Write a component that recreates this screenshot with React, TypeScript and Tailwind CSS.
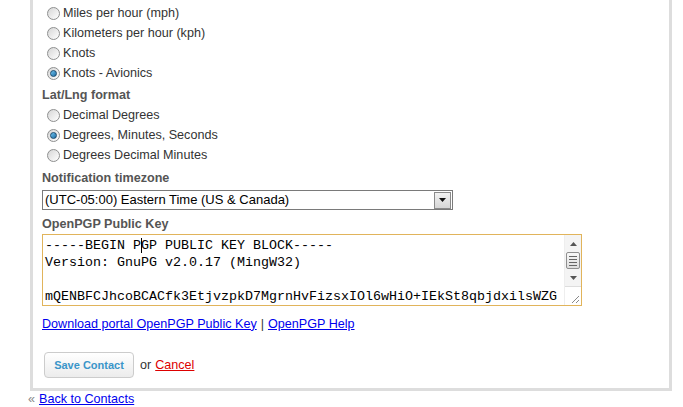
import React from "react"

function Radio({ label, checked = false }: { label: string; checked?: boolean }) {
  return (
    <div className="flex h-5 items-center pl-[5px]">
      <span className="flex h-[13px] w-[13px] items-center justify-center rounded-full border border-[#8e8f8f] bg-gradient-to-br from-[#d6d6d6] to-[#ffffff]">
        {checked && (
          <span className="h-[7px] w-[7px] rounded-full border border-[#1a4a6e] bg-gradient-to-br from-[#6ec3f0] to-[#1f6fa5]" />
        )}
      </span>
      <span className="ml-[3px]">{label}</span>
    </div>
  )
}

function FieldLabel({ children }: { children: React.ReactNode }) {
  return <div className="flex h-5 items-center font-bold text-[#555]">{children}</div>
}

export default function App() {
  const mono = { fontFamily: '"Liberation Mono", "Courier New", monospace' }
  return (
    <div
      className="h-[407px] w-[683px] overflow-hidden bg-white text-[12.6px] text-[#333]"
      style={{ fontFamily: '"Liberation Sans", Arial, sans-serif' }}
    >
      <div className="ml-[30px] w-[642px] border-x-[3px] border-b-[3px] border-[#dddddd] pb-[10px] pl-[9px] pt-[3px]">
        <Radio label="Miles per hour (mph)" />
        <Radio label="Kilometers per hour (kph)" />
        <Radio label="Knots" />
        <Radio label="Knots - Avionics" checked />
        <div className="h-[2px]" />
        <FieldLabel>Lat/Lng format</FieldLabel>
        <Radio label="Decimal Degrees" />
        <Radio label="Degrees, Minutes, Seconds" checked />
        <Radio label="Degrees Decimal Minutes" />
        <div className="h-[3px]" />
        <FieldLabel>Notification timezone</FieldLabel>
        <div className="mt-[2px] flex h-[20px] w-[411px] items-center border border-[#7a7a7a] bg-white pl-[2px] pr-[1px]">
          <span className="flex-1 text-[13px] text-black">(UTC-05:00) Eastern Time (US &amp; Canada)</span>
          <span className="flex h-[17px] w-[17px] items-center justify-center border border-[#8a8a8a] bg-gradient-to-b from-[#f2f2f2] to-[#d6d6d6]">
            <svg width="7" height="4" viewBox="0 0 7 4">
              <path d="M0 0h7L3.5 4z" fill="#111" />
            </svg>
          </span>
        </div>
        <div className="h-[4px]" />
        <FieldLabel>OpenPGP Public Key</FieldLabel>
        <div className="flex h-[72px] w-[540px] border border-[#e1b45b] bg-white">
          <div className="flex-1 overflow-hidden pl-[2px] pt-[2px] text-[13.33px] leading-[17px] text-black" style={mono}>
            <div className="whitespace-pre">
              -----BEGIN P<span className="relative inline-block w-0 align-top"><span className="absolute left-0 top-[1px] h-[15px] w-px bg-black" /></span>GP PUBLIC KEY BLOCK-----
            </div>
            <div className="whitespace-pre">Version: GnuPG v2.0.17 (MingW32)</div>
            <div className="h-[17px]" />
            <div className="whitespace-pre">mQENBFCJhcoBCACfk3EtjvzpkD7MgrnHvFizsxIOl6wHiO+IEkSt8qbjdxilsWZG</div>
          </div>
          <div className="flex w-[17px] flex-col border-l border-[#eeeeee] bg-[#f4f4f4]">
            <div className="flex h-[17px] items-center justify-center">
              <svg width="7" height="4" viewBox="0 0 7 4">
                <path d="M3.5 0L7 4H0z" fill="#555" />
              </svg>
            </div>
            <div className="mx-[1px] flex h-[17px] flex-col items-center justify-center gap-[2px] rounded-[2px] border border-[#8f8f8f] bg-gradient-to-b from-[#f8f8f8] to-[#dedede]">
              <span className="h-px w-[8px] bg-[#666]" />
              <span className="h-px w-[8px] bg-[#666]" />
              <span className="h-px w-[8px] bg-[#666]" />
              <span className="h-px w-[8px] bg-[#666]" />
            </div>
            <div className="flex h-[17px] items-center justify-center">
              <svg width="7" height="4" viewBox="0 0 7 4">
                <path d="M0 0h7L3.5 4z" fill="#555" />
              </svg>
            </div>
            <div className="flex flex-1 items-end justify-end border-t border-[#dddddd] bg-white pb-[2px] pr-[2px]">
              <svg width="8" height="8" viewBox="0 0 8 8">
                <path d="M1 8L8 1M5 8L8 5" stroke="#888" strokeWidth="1" />
              </svg>
            </div>
          </div>
        </div>
        <div className="mt-[8px] flex h-5 items-center">
          <a href="#" className="text-[#0000ee] underline">Download portal OpenPGP Public Key</a>
          <span className="mx-[4px]">|</span>
          <a href="#" className="text-[#0000ee] underline">OpenPGP Help</a>
        </div>
        <div className="mt-[18px] flex items-center pl-[2px]">
          <button className="h-[26px] w-[90px] rounded-[4px] border border-[#cccccc] bg-gradient-to-b from-[#ffffff] to-[#ececec] text-[11px] font-bold text-[#3a95c9]">
            Save Contact
          </button>
          <span className="ml-[6px]">or</span>
          <a href="#" className="ml-[4px] text-[#dd0000] underline">Cancel</a>
        </div>
      </div>
      <div className="flex h-[16px] items-center pl-[28px]">
        <span className="text-[#888]">«</span>
        <a href="#" className="ml-[4px] text-[#0000ee] underline">Back to Contacts</a>
      </div>
    </div>
  )
}
